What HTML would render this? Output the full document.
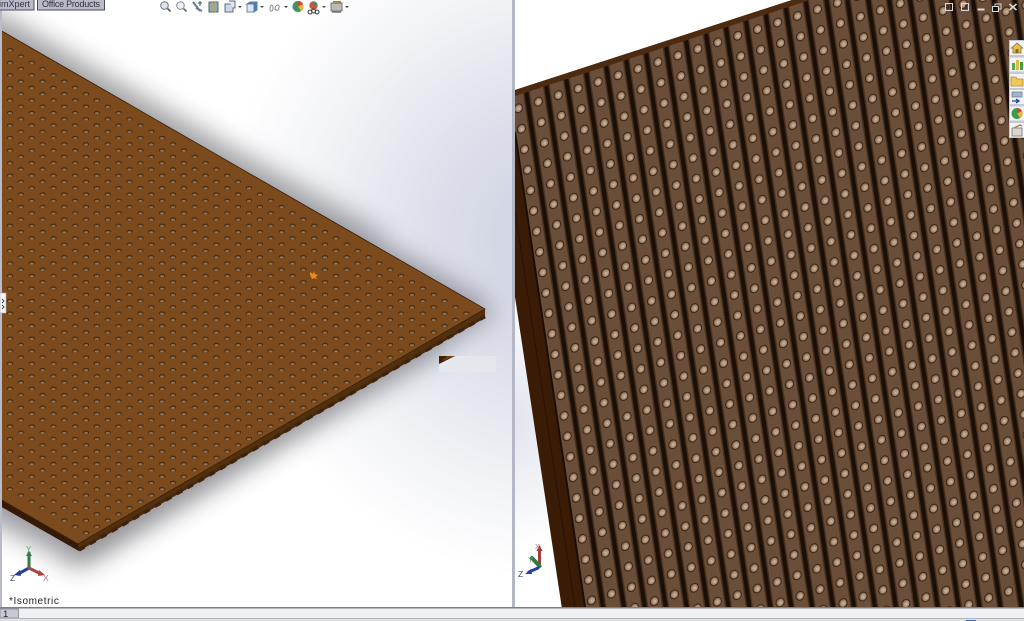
<!DOCTYPE html>
<html><head><meta charset="utf-8"><title>Isometric</title>
<style>
html,body{margin:0;padding:0;background:#fff;overflow:hidden}
svg{display:block}
text{font-family:"Liberation Sans",sans-serif}
</style></head><body>
<svg width="1024" height="621" viewBox="0 0 1024 621" xmlns="http://www.w3.org/2000/svg">
<defs>
<radialGradient id="bgL" gradientUnits="userSpaceOnUse" cx="560" cy="240" r="340">
<stop offset="0" stop-color="#ccd1e1"/><stop offset=".4" stop-color="#dde0eb"/><stop offset=".75" stop-color="#f3f4f8"/><stop offset="1" stop-color="#fff"/></radialGradient>
<radialGradient id="bgR" gradientUnits="userSpaceOnUse" cx="500" cy="420" r="130">
<stop offset="0" stop-color="#dfe3ee"/><stop offset="1" stop-color="#fff"/></radialGradient>
<filter id="b1" x="-20%" y="-20%" width="140%" height="140%"><feGaussianBlur stdDeviation="13"/></filter>
<filter id="b2" x="-20%" y="-20%" width="140%" height="140%"><feGaussianBlur stdDeviation=".3"/></filter>
<pattern id="dotsL" patternUnits="userSpaceOnUse" x="4.568" y="46.865" width="21.728" height="12.54">
<ellipse cx="5.432" cy="3.135" rx="3.2" ry="1.9" fill="#472a10"/><ellipse cx="5.432" cy="3.6" rx="2.1" ry="1.1" fill="#957350"/>
<ellipse cx="16.296" cy="9.405" rx="3.2" ry="1.9" fill="#472a10"/><ellipse cx="16.296" cy="9.87" rx="2.1" ry="1.1" fill="#957350"/>
</pattern>
<radialGradient id="ball" cx=".55" cy=".55" r=".55">
<stop offset="0" stop-color="#d2b9a3"/><stop offset=".55" stop-color="#aa8c72"/><stop offset="1" stop-color="#6f5440"/></radialGradient>
<pattern id="strip" patternUnits="userSpaceOnUse" width="1" height="1" patternTransform="matrix(19.94 -6.6 3.05 20.5 506.8 101.35)">
<rect width="1" height="1" fill="#6a4e39"/>
<rect x="0" width=".17" height="1" fill="#46301f"/><rect x=".83" width=".17" height="1" fill="#46301f"/>
<rect x="0" width=".1" height="1" fill="#1b0e06"/><rect x=".9" width=".1" height="1" fill="#1b0e06"/>
<circle cx=".5" cy=".5" r=".205" fill="url(#ball)" stroke="#2a1a0f" stroke-width=".04"/>
</pattern>
<clipPath id="cl"><rect x="0" y="0" width="512" height="607"/></clipPath>
<clipPath id="cr"><rect x="515" y="0" width="509" height="607"/></clipPath>
</defs>

<!-- left viewport -->
<rect width="513" height="607" fill="#fff"/>
<rect width="513" height="607" fill="url(#bgL)"/>
<g clip-path="url(#cl)">
<polygon points="-40,0 480,300 495,312 80,566 -40,505" fill="#55555f" opacity=".6" filter="url(#b1)"/>
<line x1="70" y1="558" x2="440" y2="344" stroke="#666" stroke-width="16" opacity=".4" filter="url(#b1)"/>
<line x1="-10" y1="18" x2="380" y2="240" stroke="#666" stroke-width="16" opacity=".4" filter="url(#b1)"/>
<polygon points="0,30 485,309 485,318 79,551 0,506" fill="#4a2a0e"/>
<polygon points="0,499 78,544 79,551 0,506" fill="#351b07"/>
<polygon points="78,544 485,309 485,315 79,548" fill="#50300f"/>
<line x1="79" y1="550" x2="485" y2="316.500" stroke="#3f2209" stroke-width="3.500" stroke-dasharray="6.500 6"/>
<polygon points="0,30 485,309 78,544 0,499" fill="#7b4a1d" stroke="#3b2009" stroke-width=".8"/>
<polygon points="0,39 474.4,312.8 84.5,537.8 0,489" fill="url(#dotsL)" filter="url(#b2)"/>
<path d="M310 272l3 2 1-3 1 3 3 1-2 2 1 2-3-1-2 1-1-2-1-2z" fill="#ea8a1c"/>
<rect x="439" y="356" width="57" height="16" fill="#e6e7ec" filter="url(#b2)"/>
<polygon points="439,356 455,356 439,364" fill="#3d2108"/>
<polygon points="442,361 455,356 447,356" fill="#6e4019"/>
</g>
<rect x="0" y="0" width="2" height="607" fill="#b9bcc8"/>
<rect x="0" y="293" width="6" height="20" fill="#f4f5f8" stroke="#a9acb8" stroke-width=".6"/>
<path d="M2 299l2 2-2 2M2 305l2 2-2 2" stroke="#444" fill="none" stroke-width=".9"/>

<!-- top tabs -->
<rect x="-4" y="-2" width="38" height="12" fill="#b9bbcd" stroke="#4c4c55"/>
<text x="-1" y="7" font-size="9" fill="#333">imXpert</text>
<rect x="37.500" y="-2" width="67" height="12" fill="#b9bbcd" stroke="#4c4c55"/>
<text x="42" y="7" font-size="9" fill="#333" textLength="58">Office Products</text>

<!-- top toolbar icons -->
<g stroke-width="1" fill="none">
<circle cx="164.500" cy="5.500" r="3.800" stroke="#6d7480" fill="#dfe3ea"/><path d="M167.500 8.500l3 3" stroke="#555" stroke-width="1.600"/>
<circle cx="180.500" cy="5.500" r="3.800" stroke="#848b96" fill="#eef0f4"/><path d="M183.500 8.500l3 3" stroke="#666" stroke-width="1.600"/>
<path d="M193 2l7 9M196 8l6 3" stroke="#5b7f99" stroke-width="2"/><path d="M200 1v5M198 3h4" stroke="#355"/>
<rect x="209" y="2" width="9" height="10" fill="#8fa8b7" stroke="#566"/><path d="M212 2v10M215 2v10" stroke="#c5a23f"/>
<rect x="225" y="4" width="8" height="8" fill="#cfd8e4" stroke="#5a6e88"/><path d="M229 1h6v7h-2" stroke="#667" fill="#e8e8e8"/>
<path d="M247 4h7v8h-7z" fill="#dfe8f2" stroke="#6c86a3"/><path d="M247 4l3-2h7v8l-3 2V4z" fill="#3f7fc0" stroke="#5b7fa3"/>
<path d="M270 9c0-5 3-5 3-1s-3 4-3 1M275 8c1-4 5-4 4 0s-4 2-4 0" stroke="#888"/>
<circle cx="298" cy="6.500" r="5.500" fill="#3b9b4b"/><path d="M298 1a5.500 5.500 0 0 1 5 3l-5 2.500z" fill="#d8423a"/><path d="M303 4a5.500 5.500 0 0 1-2 7l-3-4.500z" fill="#e8b53b"/><path d="M298 6.500l-4.500 3a5.500 5.500 0 0 1-1-3z" fill="#4a7ac0"/>
<circle cx="313.500" cy="5.500" r="4.200" fill="#c05a45"/><path d="M313.500 1.500a4 4 0 0 1 4 4h-4z" fill="#4d8b52"/><path d="M310 10a2 2 0 1 0 .1 0M317 10a2 2 0 1 0 .1 0M313.500 9a2 2 0 1 0 .1 0" stroke="#333"/>
<rect x="331" y="3" width="11" height="8" fill="#b9bcb5" stroke="#777"/><rect x="333" y="1" width="8" height="3" fill="#a8864e"/><path d="M332 12h9" stroke="#777" stroke-width="1.500"/>
</g>
<g fill="#444">
<path d="M238 6h4l-2 2zM260 6h4l-2 2zM284 6h4l-2 2zM322 6h4l-2 2zM345 6h4l-2 2z"/>
</g>

<!-- left triad -->
<g fill="none" stroke-linecap="round">
<path d="M29 567V553" stroke="#2f7c3e" stroke-width="3"/><path d="M26 556l3-5 3 5z" fill="#2f7c3e"/>
<path d="M29 568L18 574" stroke="#2a3f96" stroke-width="3"/><path d="M20 570l-6 5 7 1z" fill="#2a3f96"/>
<path d="M29 568L41 574" stroke="#a84444" stroke-width="3"/><path d="M39 570l6 5-7 1z" fill="#a84444"/>
</g>
<text x="26" y="552" font-size="8" fill="#6a9a78">Y</text>
<text x="10" y="581" font-size="8.500" fill="#3c4a88">Z</text>
<text x="43" y="581" font-size="8.500" fill="#b07272">X</text>
<text x="9" y="604" font-size="10" letter-spacing=".6" fill="#222">*Isometric</text>

<!-- divider -->
<rect x="512" y="0" width="3" height="607" fill="#b4b7c5"/>

<!-- right viewport -->
<g clip-path="url(#cr)">
<rect x="515" width="509" height="607" fill="#fff"/>
<rect x="515" y="250" width="100" height="357" fill="url(#bgR)"/>
<polygon points="515,90 792,0 1024,0 1024,607 561.700,607 515,297" fill="#3a1c06"/>
<polygon points="515,90 792,0 1024,0 1024,30 515,130" fill="#4c2b10"/>
<polygon points="515,96 810,0 1024,0 1024,607 585,607 515,132" fill="url(#strip)"/>
<path d="M515 132L585 607" stroke="#1c0e05" stroke-width="2"/>
<path d="M515 210L575 607" stroke="#27120a" stroke-width="1"/>
</g>
<g fill="none" stroke-linecap="round">
<path d="M539.500 566V549" stroke="#a33c3c" stroke-width="3"/><path d="M536.500 551l3-6 3 6z" fill="#a33c3c"/>
<path d="M539.500 566L532 558" stroke="#2f7c3e" stroke-width="4"/>
<path d="M538 568L529 572" stroke="#2a3f96" stroke-width="3"/><path d="M531 569l-6 5 7 0z" fill="#2a3f96"/>
</g>
<text x="535" y="549" font-size="7.500" fill="#b07272">X</text>
<text x="528" y="562" font-size="7.500" fill="#6a9a78">Y</text>
<text x="518" y="577" font-size="8.500" fill="#3c4a88">Z</text>

<!-- window buttons -->
<g fill="none" stroke="#d8d8d8">
<rect x="945.500" y="3.500" width="7" height="7"/><rect x="947" y="5" width="2" height="4" fill="#333" stroke="none"/>
<rect x="961.500" y="3.500" width="7" height="7"/><rect x="965" y="5" width="2" height="4" fill="#333" stroke="none"/>
<path d="M977.500 9.500h7" stroke-width="2"/>
<rect x="992.500" y="6.500" width="6" height="5"/><path d="M995 6V4h6v5h-2"/>
<path d="M1009.500 4l7 6M1016.500 4l-7 6" stroke-width="1.600"/>
</g>

<!-- right sidebar -->
<rect x="1009" y="40" width="15" height="98" fill="#c4c7d5"/>
<g fill="#f2f3f7">
<rect x="1010" y="41" width="14" height="14"/><rect x="1010" y="57.500" width="14" height="14"/><rect x="1010" y="74" width="14" height="14"/>
<rect x="1010" y="90" width="14" height="14"/><rect x="1010" y="106.500" width="14" height="14"/><rect x="1010" y="123" width="14" height="14"/>
</g>
<path d="M1011.500 48l5.500-5 5.500 5h-1.500v5h-8v-5z" fill="#e5c04e" stroke="#8b6a25" stroke-width=".8"/>
<rect x="1015.500" y="49" width="3" height="4" fill="#8b6a25"/>
<rect x="1012" y="63" width="3" height="7" fill="#58a84b"/><rect x="1016" y="60" width="3" height="10" fill="#e0bb3d"/><rect x="1020" y="62" width="3" height="8" fill="#4c9a44"/>
<path d="M1011 77h5l1 2h6v7h-12z" fill="#efc85a" stroke="#b18a2c" stroke-width=".8"/>
<rect x="1012" y="92" width="10" height="5" fill="#9fb7c7" stroke="#667a8a" stroke-width=".7"/>
<path d="M1012 101h7M1016 99l3 2-3 2" stroke="#1d3fa0" stroke-width="1.300" fill="none"/>
<circle cx="1017" cy="113.500" r="5.500" fill="#3b9b4b"/><path d="M1017 108a5.500 5.500 0 0 1 5 3l-5 2.500z" fill="#d8423a"/><path d="M1022 111a5.500 5.500 0 0 1-2 7l-3-4.500z" fill="#e8b53b"/>
<rect x="1012" y="128" width="10" height="8" fill="#d9d6cf" stroke="#777" stroke-width=".8"/><path d="M1014 128l6-3 2 1" stroke="#a8864e" fill="none" stroke-width="1.400"/>

<!-- bottom bar -->
<rect x="0" y="607" width="1024" height="14" fill="#eef0f3"/>
<rect x="0" y="607" width="1024" height="1.500" fill="#7e7e84"/>
<rect x="0" y="609" width="18.500" height="9" fill="#c6cad4" stroke="#85888f" stroke-width=".8"/>
<text x="3" y="617" font-size="9.500" fill="#222">1</text>
<rect x="0" y="618" width="1024" height="1" fill="#b1b4bd"/>
<rect x="0" y="619" width="1024" height="2" fill="#dfe1e7"/>
<rect x="966" y="620" width="10" height="1" fill="#3f63a8"/>
</svg>
</body></html>
